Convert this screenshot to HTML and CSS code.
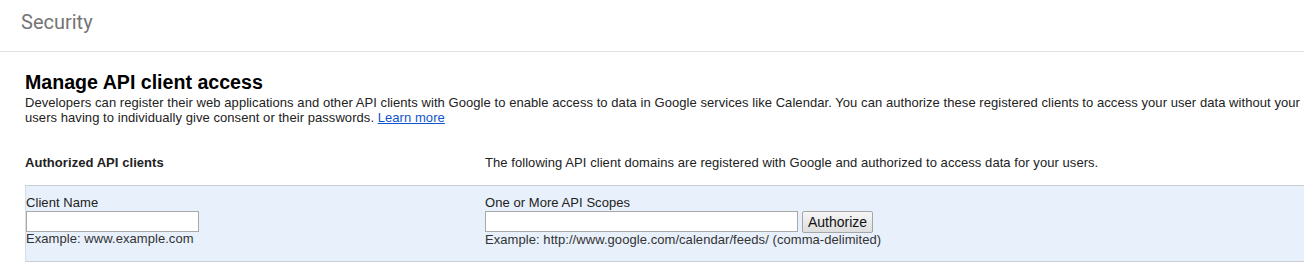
FILE: index.html
```html
<!DOCTYPE html>
<html>
<head>
<meta charset="utf-8">
<link rel="stylesheet" href="styles.css">
</head>
<body>
<div class="topbar">Security</div>
<div class="main">
  <h1 class="title">Manage API client access</h1>
  <p class="desc">Developers can register their web applications and other API clients with Google to enable access to data in Google services like Calendar. You can authorize these registered clients to access your user data without your users having to individually give consent or their passwords. <a href="#" class="link">Learn more</a></p>
  <div class="row-head">
    <div class="head-left">Authorized API clients</div>
    <div class="head-right">The following API client domains are registered with Google and authorized to access data for your users.</div>
  </div>
  <div class="panel">
    <div class="col-left">
      <div class="label">Client Name</div>
      <div class="field-line"><input type="text" class="input input-name"></div>
      <div class="hint">Example: www.example.com</div>
    </div>
    <div class="col-right">
      <div class="label">One or More API Scopes</div>
      <div class="field-line"><input type="text" class="input input-scope"><button class="btn">Authorize</button></div>
      <div class="hint">Example: http://www.google.com/calendar/feeds/ (comma-delimited)</div>
    </div>
  </div>
</div>
</body>
</html>
```

FILE: styles.css
```css
html, body {
  margin: 0;
  padding: 0;
  background: #fff;
  overflow: hidden;
}
body {
  width: 1304px;
  font-family: "Liberation Sans", Arial, sans-serif;
  font-size: 13px;
  letter-spacing: 0.06px;
  color: #222;
}
.topbar {
  box-sizing: border-box;
  height: 52px;
  padding: 11px 0 0 21px;
  font-family: Roboto, "Liberation Sans", sans-serif;
  font-size: 20px;
  line-height: 23px;
  letter-spacing: 0;
  color: #757575;
  border-bottom: 1px solid #e0e0e0;
}
.main {
  padding-left: 25px;
  width: 1300px;
}
.title {
  margin: 19px 0 0 0;
  font-size: 19.6px;
  line-height: 23px;
  letter-spacing: 0;
  font-weight: bold;
  color: #000;
}
.desc {
  margin: 1px 0 0 0;
  line-height: 15px;
  width: 1280px;
  color: #222;
}
.link {
  color: #15c;
  text-decoration: underline;
}
.row-head {
  display: grid;
  grid-template-columns: 460px 1fr;
  margin-top: 30px;
  line-height: 15px;
}
.head-left {
  font-weight: bold;
  color: #222;
}
.head-right {
  color: #222;
}
.panel {
  margin-top: 15px;
  display: grid;
  grid-template-columns: 459px 1fr;
  background: #e8f0fb;
  border-top: 1px solid #c9ced6;
  border-bottom: 1px solid #c9ced6;
  border-left: 1px solid #d6dde8;
  padding: 9px 0 15px 0;
}
.label {
  line-height: 15px;
  color: #222;
}
.field-line {
  display: flex;
  align-items: flex-start;
  gap: 4px;
  margin-top: 1px;
}
.input {
  box-sizing: border-box;
  height: 21px;
  margin: 0;
  padding: 1px 2px;
  border: 1px solid #a9a9a9;
  background: #fff;
  font-family: "Liberation Sans", Arial, sans-serif;
  font-size: 13px;
}
.input-name { width: 173px; }
.input-scope { width: 313px; }
.btn {
  box-sizing: border-box;
  width: 71px;
  height: 22px;
  margin: 0;
  padding: 0;
  border: 1px solid #a6a6a6;
  border-radius: 2px;
  background: linear-gradient(#f6f6f6, #dedede);
  font-family: "Liberation Sans", Arial, sans-serif;
  font-size: 14px;
  color: #111;
}
.hint {
  line-height: 13px;
  color: #333;
}
```
